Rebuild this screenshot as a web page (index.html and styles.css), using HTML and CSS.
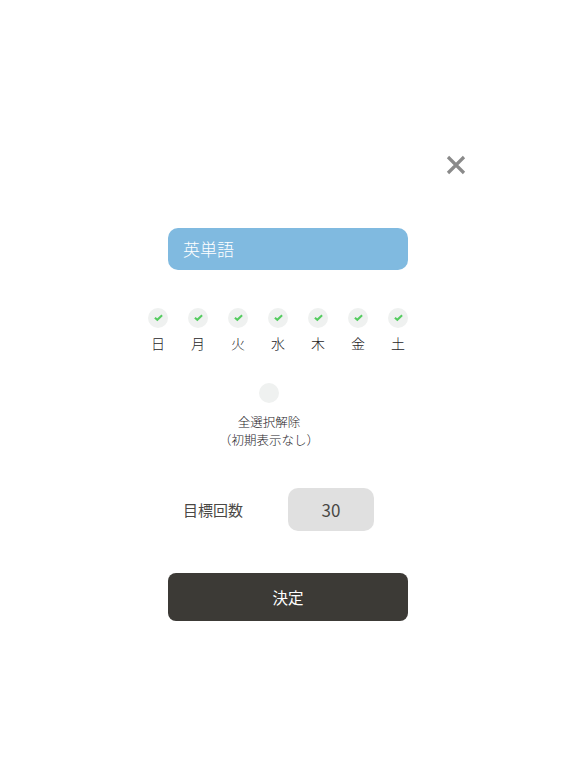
FILE: index.html
```html
<!DOCTYPE html>
<html lang="ja">
<head>
<meta charset="utf-8">
<title>目標設定</title>
<link rel="stylesheet" href="styles.css">
</head>
<body>
<main class="dialog">
  <div class="close-row">
    <button class="close" aria-label="閉じる">
      <svg viewBox="0 0 20 20" width="20" height="20"><path d="M2 2L18 18M18 2L2 18" fill="none" stroke="#8a8a8a" stroke-width="3.2"/></svg>
    </button>
  </div>
  <div class="title">英単語</div>
  <ul class="days">
    <li class="day"><span class="dot"><svg class="check" viewBox="0 0 10 8" width="9" height="7.2"><path d="M1 4.1L3.7 6.5L9 1.4" fill="none" stroke="#55cc60" stroke-width="2.3"/></svg></span><span class="day-name">日</span></li>
    <li class="day"><span class="dot"><svg class="check" viewBox="0 0 10 8" width="9" height="7.2"><path d="M1 4.1L3.7 6.5L9 1.4" fill="none" stroke="#55cc60" stroke-width="2.3"/></svg></span><span class="day-name">月</span></li>
    <li class="day"><span class="dot"><svg class="check" viewBox="0 0 10 8" width="9" height="7.2"><path d="M1 4.1L3.7 6.5L9 1.4" fill="none" stroke="#55cc60" stroke-width="2.3"/></svg></span><span class="day-name">火</span></li>
    <li class="day"><span class="dot"><svg class="check" viewBox="0 0 10 8" width="9" height="7.2"><path d="M1 4.1L3.7 6.5L9 1.4" fill="none" stroke="#55cc60" stroke-width="2.3"/></svg></span><span class="day-name">水</span></li>
    <li class="day"><span class="dot"><svg class="check" viewBox="0 0 10 8" width="9" height="7.2"><path d="M1 4.1L3.7 6.5L9 1.4" fill="none" stroke="#55cc60" stroke-width="2.3"/></svg></span><span class="day-name">木</span></li>
    <li class="day"><span class="dot"><svg class="check" viewBox="0 0 10 8" width="9" height="7.2"><path d="M1 4.1L3.7 6.5L9 1.4" fill="none" stroke="#55cc60" stroke-width="2.3"/></svg></span><span class="day-name">金</span></li>
    <li class="day"><span class="dot"><svg class="check" viewBox="0 0 10 8" width="9" height="7.2"><path d="M1 4.1L3.7 6.5L9 1.4" fill="none" stroke="#55cc60" stroke-width="2.3"/></svg></span><span class="day-name">土</span></li>
  </ul>
  <div class="clear">
    <span class="dot"></span>
    <p class="clear-text">全選択解除<br>（初期表示なし）</p>
  </div>
  <div class="goal">
    <span class="goal-label">目標回数</span>
    <span class="goal-value">30</span>
  </div>
  <button class="submit">決定</button>
</main>
</body>
</html>
```
FILE: styles.css
```css
* {
  box-sizing: border-box;
}

html,
body {
  margin: 0;
  height: 100%;
  background: #fff;
}

body {
  font-family: "Noto Sans CJK JP", "Noto Sans", sans-serif;
  font-weight: 300;
  color: #26241f;
  text-spacing-trim: space-all;
}

.dialog {
  display: flex;
  flex-direction: column;
  align-items: center;
  padding-top: 155px;
}

.close-row {
  display: flex;
  justify-content: flex-end;
  width: 356px;
  height: 73px;
}

.close {
  width: 20px;
  height: 20px;
  padding: 0;
  border: 0;
  background: none;
  line-height: 0;
}

.title {
  width: 240px;
  height: 42px;
  padding-left: 15px;
  border-radius: 10px;
  background: #80bae0;
  color: #fff;
  font-size: 17px;
  line-height: 42px;
}

.days {
  display: flex;
  justify-content: space-between;
  width: 260px;
  margin: 38px 0 0 -20px;
  padding: 0;
  list-style: none;
}

.day {
  display: flex;
  flex-direction: column;
  align-items: center;
  width: 20px;
}

.dot {
  display: flex;
  align-items: center;
  justify-content: center;
  width: 20px;
  height: 20px;
  border-radius: 50%;
  background: #eff1f0;
}

.day-name {
  margin-top: 5px;
  font-size: 14px;
  line-height: 20px;
}

.clear {
  display: flex;
  flex-direction: column;
  align-items: center;
  margin: 30px 0 0 -38px;
}

.clear-text {
  margin: 10px 0 0;
  font-size: 12.5px;
  line-height: 18px;
  text-align: center;
}

.goal {
  display: flex;
  align-items: center;
  width: 240px;
  margin-top: 39px;
  padding-left: 15px;
  font-weight: 400;
  color: #4a4845;
}

.goal-label {
  width: 105px;
  font-size: 15px;
  line-height: 20px;
}

.goal-value {
  width: 86px;
  height: 43px;
  border-radius: 10px;
  background: #e0e0e0;
  font-size: 17px;
  line-height: 44px;
  text-align: center;
}

.submit {
  width: 240px;
  height: 48px;
  margin-top: 42px;
  padding: 0;
  border: 0;
  border-radius: 8px;
  background: #3c3a36;
  color: #fff;
  font: inherit;
  font-size: 15.5px;
  font-weight: 400;
  line-height: 47px;
}
```
